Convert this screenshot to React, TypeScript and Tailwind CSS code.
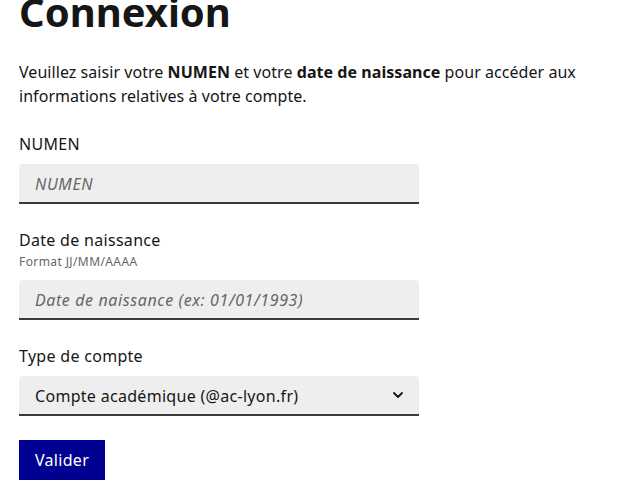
import { ChevronDown } from 'lucide-react'

const font = { fontFamily: '"Noto Sans", "Liberation Sans", sans-serif' }

function Field({ label, hint, placeholder }: { label: string; hint?: string; placeholder: string }) {
    return (
        <div className="mb-6 w-[400px]">
            <label className="block text-base leading-6 tracking-[0.3px] text-[#161616]">{label}</label>
            {hint && <span className="block text-xs leading-5 tracking-[0.4px] text-[#666666]">{hint}</span>}
            <input
                type="text"
                placeholder={placeholder}
                className="mt-2 block h-10 w-full rounded-t bg-[#eeeeee] px-4 text-base text-[#161616] shadow-[inset_0_-2px_0_0_#3a3a3a] outline-none placeholder:italic placeholder:tracking-[0.6px] placeholder:text-[#666666]"
            />
        </div>
    )
}

export default function App() {
    return (
        <div className="min-h-screen bg-white px-[19px]" style={font}>
            <h1 className="-mt-[12px] mb-6 text-[40px] font-bold leading-[48px] text-[#161616]">Connexion</h1>

            <p className="mb-6 w-[580px] text-base leading-6 tracking-[0.05px] text-[#161616]">
                Veuillez saisir votre <b>NUMEN</b> et votre <b>date de naissance</b> pour accéder aux informations relatives à votre compte.
            </p>

            <form onSubmit={(e) => e.preventDefault()}>
                <Field label="NUMEN" placeholder="NUMEN" />
                <Field label="Date de naissance" hint="Format JJ/MM/AAAA" placeholder="Date de naissance (ex: 01/01/1993)" />

                <div className="mb-6 w-[400px]">
                    <label className="block text-base leading-6 tracking-[0.3px] text-[#161616]">Type de compte</label>
                    <div className="relative mt-2 flex h-10 items-center rounded-t bg-[#eeeeee] pl-4 pr-10 text-base tracking-[0.3px] text-[#161616] shadow-[inset_0_-2px_0_0_#3a3a3a]">
                        Compte académique (@ac-lyon.fr)
                        <ChevronDown className="absolute right-[13px] top-[11px] h-4 w-4 text-[#161616]" strokeWidth={2.75} />
                    </div>
                </div>

                <button type="submit" className="h-10 bg-[#000091] px-4 text-base leading-6 tracking-[0.3px] text-white">
                    Valider
                </button>
            </form>
        </div>
    )
}
